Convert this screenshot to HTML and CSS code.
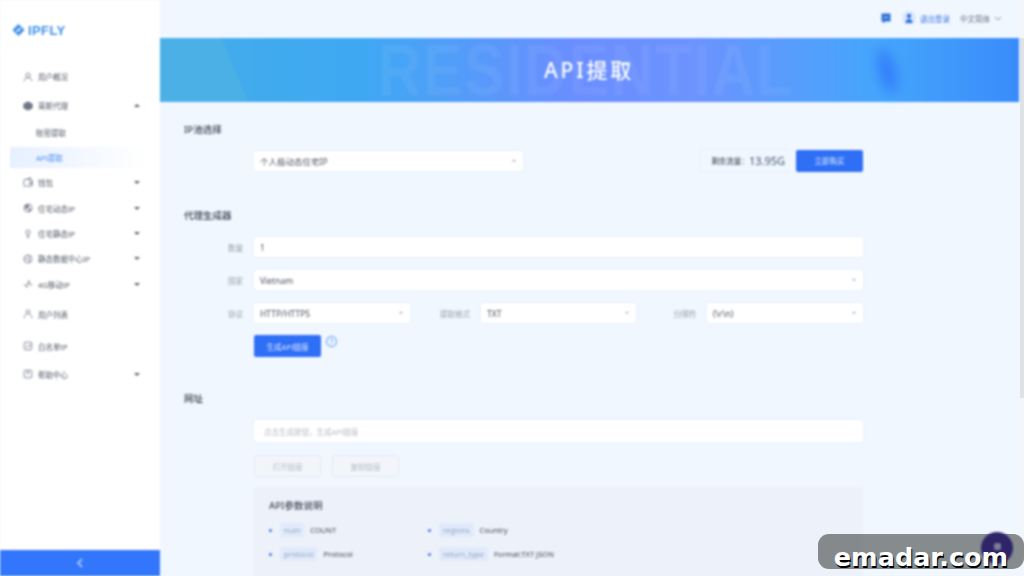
FILE: index.html
```html
<!DOCTYPE html>
<html lang="zh-CN">
<head>
  <meta charset="UTF-8" />
  <meta name="viewport" content="width=device-width, initial-scale=1.0"/>
  <title>IPFLY - API提取</title>
  <link rel="stylesheet" href="styles.css">
</head>
<body>
  <div class="page">
    <aside class="sidebar">
      <div class="logo">
        <svg width="13" height="14" viewBox="0 0 16 16"><path d="M8 0.500 15.500 8 8 15.500 0.500 8Z" fill="#3f8fe8"/><path d="M5.500 10 10.500 6" stroke="#fff" stroke-width="2" fill="none"/></svg>
        <span>IPFLY</span>
      </div>
      <ul class="menu">
        <li class="menu-item h-29">
          <svg class="icon" viewBox="0 0 12 12"><circle cx="6" cy="4" r="2.600"/><path d="M1.500 11c0-3 2-4.200 4.500-4.200s4.500 1.200 4.500 4.200"/></svg>
          <span>用户概况</span>
        </li>
        <li class="menu-item h-29">
          <svg class="icon" viewBox="0 0 12 12"><path class="solid" d="M1 3.500 6 1l5 2.500v5L6 11 1 8.500Z"/></svg>
          <span>哥斯代理</span>
          <i class="caret up"></i>
        </li>
        <li class="menu-sub">账密提取</li>
        <li class="menu-sub active">API提取</li>
        <li class="menu-item h-26">
          <svg class="icon" viewBox="0 0 12 12"><rect x="1" y="3" width="10" height="8" rx="1"/><path d="M4 3 8 1h1v2M8 6h3v2.500H8Z"/></svg>
          <span>钱包</span>
          <i class="caret"></i>
        </li>
        <li class="menu-item h-26">
          <svg class="icon" viewBox="0 0 12 12"><circle cx="6" cy="6" r="4.800"/><path class="solid" d="M4 2.500 7 3 6 6 3 6.500Z"/><path class="solid" d="M7 7l2 .5L7 10Z"/></svg>
          <span>住宅动态IP</span>
          <i class="caret"></i>
        </li>
        <li class="menu-item h-25">
          <svg class="icon" viewBox="0 0 12 12"><circle cx="6" cy="4" r="2.600"/><path d="M6 6.600V11M4.500 9.500h3"/></svg>
          <span>住宅静态IP</span>
          <i class="caret"></i>
        </li>
        <li class="menu-item h-25">
          <svg class="icon" viewBox="0 0 12 12"><circle cx="6" cy="6" r="4.800"/><path d="M1.500 6h6v4M6 1.500 8 5"/></svg>
          <span>静态数据中心IP</span>
          <i class="caret"></i>
        </li>
        <li class="menu-item h-26">
          <svg class="icon" viewBox="0 0 12 12"><path d="M1 7h2l1.500 3L7 2l1.500 5H11"/></svg>
          <span>4G移动IP</span>
          <i class="caret"></i>
        </li>
        <li class="menu-item h-32 list-start">
          <svg class="icon" viewBox="0 0 12 12"><circle cx="6" cy="3.500" r="2.300"/><path d="M1.500 11c0-3 1.500-4.500 3-5M10.500 11c0-3-1.500-4.500-3-5"/></svg>
          <span>用户列表</span>
        </li>
        <li class="menu-item h-32">
          <svg class="icon" viewBox="0 0 12 12"><rect x="1.500" y="1.500" width="9" height="9" rx="1"/><path d="M3.500 8 6 5.500 7.500 7l1.500-3"/></svg>
          <span>白名单IP</span>
        </li>
        <li class="menu-item h-24">
          <svg class="icon" viewBox="0 0 12 12"><rect x="1.500" y="1.500" width="9" height="9" rx="1"/><path d="M6 1.500V6M4.500 4.500 6 6l1.500-1.500"/></svg>
          <span>帮助中心</span>
          <i class="caret"></i>
        </li>
      </ul>
      <div class="collapse-bar">
        <svg width="8" height="10" viewBox="0 0 8 10"><path d="M6 1 2 5l4 4" fill="none" stroke="#a9c6ff" stroke-width="1.800"/></svg>
      </div>
    </aside>

    <main class="main">
      <header class="topbar">
        <svg class="top-icon" width="10" height="11" viewBox="0 0 10 11"><path d="M0.500 0.500h9v8H4L2 10.500V8.500H0.500Z" fill="#2f6fd8"/><path d="M3 4.500h4" stroke="#cfe0fb"/></svg>
        <span class="avatar">
          <svg width="10" height="10" viewBox="0 0 10 10"><circle cx="5" cy="3" r="2.200" fill="#2f6fd8"/><path d="M1.500 10c0-3 1.500-4 3.500-4s3.500 1 3.500 4Z" fill="#2f6fd8"/></svg>
        </span>
        <a class="logout">退出登录</a>
        <span class="lang">中文简体</span>
        <svg width="8" height="5" viewBox="0 0 8 5"><path d="M1 1 4 4 7 1" fill="none" stroke="#8a93a3"/></svg>
      </header>

      <section class="banner">
        <div class="banner-shape"></div>
        <div class="banner-blob"></div>
        <div class="banner-ghost">RESIDENTIAL</div>
        <h1>API提取</h1>
      </section>

      <div class="content">
        <h2 class="first">IP池选择</h2>
        <div class="pool-row">
          <div class="field pool-select">个人极动态住宅IP<i class="arrow"></i></div>
          <div class="traffic">
            <span class="traffic-box">剩余流量：<b>13.95G</b></span>
            <button class="btn">立即购买</button>
          </div>
        </div>

        <h2 class="generator">代理生成器</h2>
        <div class="form-row">
          <label>数量</label>
          <div class="field grow">1</div>
        </div>
        <div class="form-row">
          <label>国家</label>
          <div class="field grow">Vietnam<i class="arrow"></i></div>
        </div>
        <div class="form-row triple">
          <label>协议</label>
          <div class="field">HTTP/HTTPS<i class="arrow"></i></div>
          <label>提取格式</label>
          <div class="field">TXT<i class="arrow"></i></div>
          <label>分隔符</label>
          <div class="field">(\r\n)<i class="arrow"></i></div>
        </div>
        <div class="action-row">
          <button class="btn">生成API链接</button>
          <span class="help">?</span>
        </div>

        <h2 class="site">网址</h2>
        <div class="indent">
          <div class="field url">点击生成按钮，生成API链接</div>
          <div class="ghost-buttons">
            <button class="btn-off">打开链接</button>
            <button class="btn-off">复制链接</button>
          </div>
          <div class="params">
            <h3>API参数说明</h3>
            <ul class="param-list">
              <li><code>num</code>COUNT</li>
              <li><code>regions</code>Country</li>
              <li><code>protocol</code>Protocol</li>
              <li><code>return_type</code>Format:TXT JSON</li>
            </ul>
          </div>
        </div>
      </div>
    </main>

    <div class="scrollbar"></div>

    <div class="watermark">
      <div class="chat-bubble"></div>
      emadar.com
    </div>
  </div>
</body>
</html>
```

FILE: styles.css
```css
html, body {
  margin: 0;
  padding: 0;
  height: 100%;
  overflow: hidden;
  background-color: #f0f7ff;
}
body {
  font-family: "Noto Sans", "Noto Sans CJK SC", sans-serif;
  color: #333b4a;
}
ul {
  list-style-type: none;
  margin: 0;
  padding: 0;
}
.page {
  display: flex;
  position: relative;
  width: 1024px;
  height: 576px;
  overflow: hidden;
}

/* sidebar */
.sidebar {
  display: flex;
  flex-direction: column;
  width: 160px;
  flex-shrink: 0;
  background-color: #fff;
  filter: blur(0.8px);
}
.logo {
  display: flex;
  align-items: center;
  gap: 3px;
  height: 60px;
  padding-left: 12px;
  color: #3f8fe8;
  font-family: "Liberation Sans", sans-serif;
  font-size: 13px;
  font-weight: bold;
  letter-spacing: 0.4px;
}
.menu {
  flex: 1;
  font-size: 7.5px;
  color: #4f5664;
  padding-top: 2px;
}
.menu-item {
  display: flex;
  align-items: center;
  padding: 0 20px 0 23px;
}
.h-24 { height: 24px; }
.h-25 { height: 25px; }
.h-26 { height: 26px; }
.h-29 { height: 29px; }
.h-32 { height: 32px; }
.list-start { margin-top: 1px; }
.menu-item span {
  margin-left: 5px;
  flex: 1;
}
.icon {
  width: 10px;
  height: 10px;
  fill: none;
  stroke: #6e7583;
  stroke-width: 1;
}
.icon .solid {
  fill: #6e7583;
}
.caret {
  width: 0;
  height: 0;
  border-left: 3px solid transparent;
  border-right: 3px solid transparent;
  border-top: 3px solid #5b6270;
}
.caret.up {
  border-top: 0;
  border-bottom: 3px solid #5b6270;
}
.menu-sub {
  display: flex;
  align-items: center;
  height: 25px;
  margin: 0 15px 0 10px;
  padding-left: 26px;
}
.menu-sub.active {
  height: 21px;
  margin-top: 2px;
  margin-bottom: 1px;
  color: #4a8bf0;
  background: linear-gradient(90deg, #e6f0ff, #ffffff);
}
.collapse-bar {
  display: flex;
  align-items: center;
  justify-content: center;
  height: 26px;
  background-color: #3176fb;
}

/* main */
.main {
  flex: 1;
  min-width: 0;
  filter: blur(0.8px);
}
.topbar {
  display: flex;
  align-items: center;
  justify-content: flex-end;
  height: 36px;
  padding-bottom: 2px;
  padding-right: 17px;
  font-size: 7.5px;
  color: #6a7280;
}
.avatar {
  display: flex;
  align-items: center;
  justify-content: center;
  width: 14px;
  height: 14px;
  margin-left: 11px;
  border-radius: 50%;
  background-color: #dbe8fb;
}
.logout {
  margin-left: 4px;
  color: #3a74e0;
}
.lang {
  margin-left: 10px;
  margin-right: 4px;
}
.banner {
  position: relative;
  height: 64px;
  display: flex;
  align-items: center;
  justify-content: center;
  background: linear-gradient(90deg, #43ade8 0%, #3fa8f4 24%, #6a8eff 48%, #6c93fe 62%, #44a6fb 84%, #3a8bfb 100%);
}
.banner h1 {
  position: relative;
  margin: 0 1px 2px 0;
  font-size: 21px;
  font-weight: 500;
  letter-spacing: 2.8px;
  color: #fff;
}
.banner-shape {
  position: absolute;
  left: 0;
  top: 0;
  bottom: 0;
  width: 88px;
  background-color: #4bb0e6;
  clip-path: polygon(0 0, 70% 0, 100% 100%, 0 100%);
}
.banner-blob {
  position: absolute;
  left: 720px;
  top: 10px;
  width: 14px;
  height: 46px;
  border-radius: 50%;
  background-color: #2f74fb;
  filter: blur(7px);
  transform: rotate(-14deg);
}
.banner-ghost {
  position: absolute;
  left: 218px;
  top: 0;
  font-family: "Liberation Sans", sans-serif;
  font-size: 72px;
  font-weight: bold;
  line-height: 64px;
  letter-spacing: 2px;
  color: rgba(255, 255, 255, 0.06);
  white-space: nowrap;
  transform-origin: left center;
  transform: scaleX(0.83);
}
.content {
  padding: 0 0 0 24px;
  width: 679px;
  font-size: 8.5px;
}
h2 {
  margin: 0;
  font-size: 9.5px;
  font-weight: 500;
  line-height: 14px;
  color: #3a4250;
}
h2.first { padding-top: 21px; }
h2.generator { padding-top: 37px; }
h2.site { padding-top: 35px; }
.pool-row {
  display: flex;
  align-items: center;
  justify-content: space-between;
  margin-top: 12px;
  padding-left: 70px;
}
.field {
  display: flex;
  align-items: center;
  position: relative;
  height: 20px;
  padding-left: 6px;
  box-sizing: border-box;
  background-color: #fff;
  border-radius: 2px;
  color: #49505e;
  box-shadow: 0 0 2px rgba(150, 175, 210, 0.25);
}
.pool-select {
  width: 269px;
}
.arrow {
  position: absolute;
  right: 7px;
  top: 9px;
  width: 0;
  height: 0;
  border-left: 2px solid transparent;
  border-right: 2px solid transparent;
  border-top: 2px solid #a5abb5;
}
.traffic {
  display: flex;
  align-items: center;
}
.traffic-box {
  display: flex;
  align-items: center;
  height: 21px;
  margin-right: 6px;
  padding: 0 5px 0 11px;
  border: 1px solid #e9f0f8;
  border-right: 0;
  font-size: 7.5px;
  white-space: nowrap;
}
.traffic-box b {
  margin-left: 0;
  font-size: 11px;
  font-weight: 400;
  color: #45526e;
}
.btn {
  height: 22px;
  width: 67px;
  padding: 0;
  border: none;
  border-radius: 2px;
  background-color: #2e6ff6;
  color: #dfe9ff;
  font-family: inherit;
  font-size: 7.5px;
}
.form-row {
  display: grid;
  grid-template-columns: 70px 1fr;
  align-items: center;
  margin-bottom: 13px;
}
h2.generator + .form-row {
  margin-top: 14px;
}
.form-row label {
  padding-right: 11px;
  text-align: right;
  font-size: 7.5px;
  color: #9aa1ad;
}
.form-row.triple {
  grid-template-columns: 70px 156px 71px 155px 71px 156px;
  margin-bottom: 12px;
}
.action-row {
  display: flex;
  align-items: flex-start;
  padding-left: 70px;
}
.help {
  display: flex;
  align-items: center;
  justify-content: center;
  width: 9px;
  height: 9px;
  margin: 1px 0 0 5px;
  border: 1px solid #4f8df0;
  border-radius: 50%;
  font-size: 7px;
  color: #4f8df0;
}
.indent {
  padding-left: 70px;
  margin-top: 14px;
}
.url {
  height: 22px;
  padding-left: 10px;
  font-size: 7.5px;
  color: #b4bac4;
}
.ghost-buttons {
  display: flex;
  gap: 11px;
  margin-top: 13px;
}
.btn-off {
  width: 67px;
  height: 22px;
  padding: 0;
  border: 1px solid #e7ebf0;
  border-radius: 2px;
  background-color: #f2f5f9;
  color: #b8bdc6;
  font-family: inherit;
  font-size: 7.5px;
}
.params {
  margin-top: 10px;
  height: 120px;
  padding: 12px 15px;
  box-sizing: border-box;
  background-color: #edf1f9;
  border-radius: 3px;
}
.params h3 {
  margin: 0 0 9px;
  font-size: 9.5px;
  font-weight: 500;
  line-height: 14px;
  color: #444c5a;
}
.param-list {
  display: grid;
  grid-template-columns: 159px 1fr;
  row-gap: 8px;
  font-size: 7.5px;
  color: #3f4654;
}
.param-list li {
  display: flex;
  align-items: center;
  height: 16px;
}
.param-list li::before {
  content: "";
  width: 3px;
  height: 3px;
  margin-right: 8px;
  border-radius: 50%;
  background-color: #3c74dd;
}
.param-list code {
  margin-right: 6px;
  padding: 0 4px;
  line-height: 14px;
  border-radius: 2px;
  background-color: #e1eafa;
  color: #94a5c8;
  font-family: inherit;
}
.scrollbar {
  flex-shrink: 0;
  width: 4px;
  margin-left: 1px;
  background: linear-gradient(#f3f6fa 38px, #dfe3e6 38px, #dfe3e6 398px, #f3f6fa 398px);
}

/* video overlay */
.watermark {
  position: absolute;
  isolation: isolate;
  left: 818px;
  top: 534px;
  width: 206px;
  height: 35px;
  padding-top: 8px;
  box-sizing: border-box;
  border-radius: 11px;
  background-color: rgba(70, 72, 72, 0.62);
  color: #fff;
  font-family: "DejaVu Sans", sans-serif;
  font-size: 25.5px;
  font-weight: bold;
  line-height: 30px;
  text-align: center;
  text-shadow: 1px 2px 0 #000;
}
.chat-bubble {
  position: absolute;
  z-index: -1;
  left: 163px;
  top: -2px;
  width: 32px;
  height: 32px;
  border-radius: 50%;
  background-color: #2e2468;
  filter: blur(1px);
}
.chat-bubble::after {
  content: "";
  position: absolute;
  left: 13px;
  top: 11px;
  width: 7px;
  height: 7px;
  border-radius: 2px;
  background-color: #7d7c96;
}
```
